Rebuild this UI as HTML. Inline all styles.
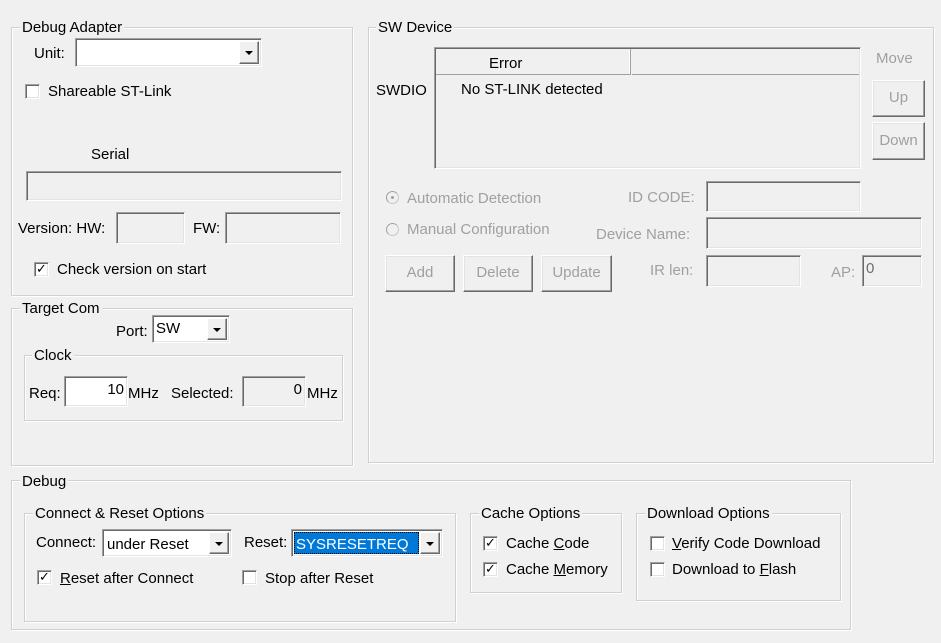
<!DOCTYPE html>
<html><head><style>
*{margin:0;padding:0;box-sizing:border-box}
body{width:941px;height:643px;background:#f0f0f0;font-family:"Liberation Sans","Noto Sans CJK SC",sans-serif;font-size:15px;color:#000;position:relative;overflow:hidden}
.a{position:absolute}
.t{position:absolute;white-space:nowrap;line-height:18px;margin-top:1px}
.g{position:absolute;border:1px solid #d0d0d0;box-shadow:inset 1px 1px 0 #fff,1px 1px 0 #fff}
.lg{position:absolute;background:#f0f0f0;padding:0 2px;line-height:18px;white-space:nowrap;margin-top:1px}
.e{position:absolute;border:1px solid;border-color:#a0a0a0 #fff #fff #a0a0a0;box-shadow:inset 1px 1px 0 #696969,inset -1px -1px 0 #e3e3e3;background:#f0f0f0}
.w{background:#fff}
.dis{color:#a0a0a0}
.btn{position:absolute;border:1px solid;border-color:#fff #696969 #696969 #fff;box-shadow:inset -1px -1px 0 #a0a0a0,inset 1px 1px 0 #e3e3e3;background:#f0f0f0;color:#a0a0a0;text-align:center}
.cb{position:absolute;width:15px;height:15px;background:#fff;border:1px solid;border-color:#a0a0a0 #fff #fff #a0a0a0;box-shadow:inset 1px 1px 0 #696969,inset -1px -1px 0 #e3e3e3;font-size:13px;line-height:13px;text-align:center;font-weight:bold;font-family:"DejaVu Sans",sans-serif}
.dd{position:absolute;right:2px;top:2px;bottom:2px;width:20px;border:1px solid;border-color:#fff #696969 #696969 #fff;box-shadow:inset -1px -1px 0 #a0a0a0;background:#f0f0f0}
.dd:after{content:"";position:absolute;left:5px;top:9px;border:4px solid transparent;border-top:4px solid #000;border-bottom:0}
u{text-decoration:underline}
</style></head><body>

<!-- Debug Adapter -->
<div class="g" style="left:11px;top:27px;width:342px;height:269px"></div>
<div class="lg" style="left:20px;top:18px">Debug Adapter</div>
<div class="t" style="left:34px;top:44px">Unit:</div>
<div class="e w" style="left:75px;top:38px;width:187px;height:29px"><div class="dd"></div></div>
<div class="cb" style="left:25px;top:84px"></div>
<div class="t" style="left:48px;top:82px">Shareable ST-Link</div>
<div class="t" style="left:91px;top:145px">Serial</div>
<div class="e" style="left:26px;top:171px;width:316px;height:30px"></div>
<div class="t" style="left:18px;top:219px">Version: HW:</div>
<div class="e" style="left:116px;top:212px;width:69px;height:32px"></div>
<div class="t" style="left:193px;top:219px">FW:</div>
<div class="e" style="left:225px;top:212px;width:116px;height:32px"></div>
<div class="cb" style="left:34px;top:262px">✓</div>
<div class="t" style="left:57px;top:260px">Check version on start</div>

<!-- Target Com -->
<div class="g" style="left:11px;top:308px;width:342px;height:158px"></div>
<div class="lg" style="left:20px;top:299px">Target Com</div>
<div class="t" style="left:116px;top:322px">Port:</div>
<div class="e w" style="left:152px;top:315px;width:78px;height:28px"><div class="t" style="left:3px;top:3px">SW</div><div class="dd"></div></div>
<div class="g" style="left:24px;top:355px;width:319px;height:66px"></div>
<div class="lg" style="left:32px;top:346px">Clock</div>
<div class="t" style="left:29px;top:384px">Req:</div>
<div class="e w" style="left:64px;top:376px;width:64px;height:31px"><div class="t" style="right:3px;top:3px">10</div></div>
<div class="t" style="left:128px;top:384px">MHz</div>
<div class="t" style="left:171px;top:384px">Selected:</div>
<div class="e" style="left:242px;top:376px;width:64px;height:31px"><div class="t" style="right:3px;top:3px">0</div></div>
<div class="t" style="left:307px;top:384px">MHz</div>

<!-- SW Device -->
<div class="g" style="left:368px;top:27px;width:566px;height:436px"></div>
<div class="lg" style="left:376px;top:18px">SW Device</div>
<div class="e" style="left:434px;top:47px;width:427px;height:122px">
  <div class="a" style="left:1px;top:1px;width:195px;height:26px;border-right:1px solid #a0a0a0;border-bottom:1px solid #a0a0a0;box-shadow:inset -1px 0 0 #fff"></div>
  <div class="a" style="left:197px;top:1px;right:1px;height:26px;border-bottom:1px solid #a0a0a0"></div>
  <div class="t" style="left:54px;top:6px">Error</div>
  <div class="t" style="left:26px;top:32px">No ST-LINK detected</div>
</div>
<div class="t" style="left:376px;top:81px">SWDIO</div>
<div class="t dis" style="left:876px;top:49px">Move</div>
<div class="btn" style="left:872px;top:80px;width:53px;height:37px;line-height:34px">Up</div>
<div class="btn" style="left:872px;top:122px;width:53px;height:38px;line-height:35px">Down</div>

<div class="a" style="left:386px;top:191px;width:13px;height:13px;border-radius:50%;border:1px solid #c8c8c8;border-left-color:#a0a0a0;border-top-color:#a0a0a0;background:#f0f0f0"><div class="a" style="left:4px;top:4px;width:3px;height:3px;border-radius:50%;background:#a0a0a0"></div></div>
<div class="t dis" style="left:407px;top:189px">Automatic Detection</div>
<div class="a" style="left:386px;top:223px;width:13px;height:13px;border-radius:50%;border:1px solid #c8c8c8;border-left-color:#a0a0a0;border-top-color:#a0a0a0"></div>
<div class="t dis" style="left:407px;top:220px">Manual Configuration</div>
<div class="t dis" style="left:628px;top:188px">ID CODE:</div>
<div class="e" style="left:706px;top:181px;width:155px;height:31px"></div>
<div class="t dis" style="left:596px;top:225px">Device Name:</div>
<div class="e" style="left:706px;top:217px;width:216px;height:32px"></div>
<div class="btn" style="left:385px;top:255px;width:70px;height:37px;line-height:34px">Add</div>
<div class="btn" style="left:463px;top:255px;width:70px;height:37px;line-height:34px">Delete</div>
<div class="btn" style="left:541px;top:255px;width:71px;height:37px;line-height:34px">Update</div>
<div class="t dis" style="left:650px;top:261px">IR len:</div>
<div class="e" style="left:706px;top:255px;width:95px;height:32px"></div>
<div class="t dis" style="left:831px;top:263px">AP:</div>
<div class="e" style="left:862px;top:255px;width:60px;height:32px"><div class="t" style="left:3px;top:3px;color:#6d6d6d">0</div></div>

<!-- Debug -->
<div class="g" style="left:11px;top:480px;width:840px;height:150px"></div>
<div class="lg" style="left:20px;top:472px">Debug</div>
<div class="g" style="left:24px;top:513px;width:432px;height:109px"></div>
<div class="lg" style="left:33px;top:504px">Connect &amp; Reset Options</div>
<div class="t" style="left:36px;top:533px">Connect:</div>
<div class="e w" style="left:102px;top:529px;width:130px;height:28px"><div class="t" style="left:4px;top:5px">under Reset</div><div class="dd"></div></div>
<div class="t" style="left:244px;top:533px">Reset:</div>
<div class="e w" style="left:291px;top:529px;width:152px;height:28px"><div class="a" style="left:2px;top:2px;width:125px;height:22px;background:#0078d7;border:1px dotted #000"></div><div class="t" style="left:4px;top:5px;color:#fff">SYSRESETREQ</div><div class="dd"></div></div>
<div class="cb" style="left:37px;top:570px">✓</div>
<div class="t" style="left:60px;top:569px"><u>R</u>eset after Connect</div>
<div class="cb" style="left:242px;top:570px"></div>
<div class="t" style="left:265px;top:569px">Stop after Reset</div>

<div class="g" style="left:470px;top:513px;width:152px;height:80px"></div>
<div class="lg" style="left:479px;top:504px">Cache Options</div>
<div class="cb" style="left:483px;top:536px">✓</div>
<div class="t" style="left:506px;top:534px">Cache <u>C</u>ode</div>
<div class="cb" style="left:483px;top:562px">✓</div>
<div class="t" style="left:506px;top:560px">Cache <u>M</u>emory</div>

<div class="g" style="left:636px;top:513px;width:205px;height:88px"></div>
<div class="lg" style="left:645px;top:504px">Download Options</div>
<div class="cb" style="left:650px;top:536px"></div>
<div class="t" style="left:672px;top:534px;width:163px;overflow:hidden"><u>V</u>erify Code Download</div>
<div class="cb" style="left:650px;top:562px"></div>
<div class="t" style="left:672px;top:560px">Download to <u>F</u>lash</div>
</body></html>
